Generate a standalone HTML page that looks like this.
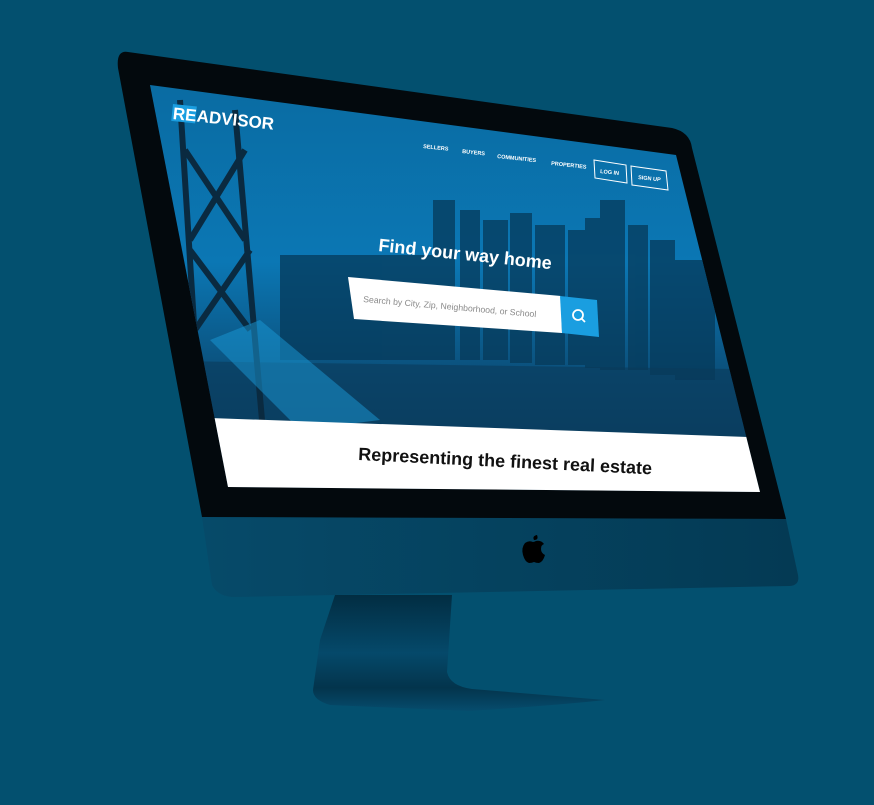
<!DOCTYPE html>
<html><head><meta charset="utf-8"><style>
html,body{margin:0;padding:0;background:#03506f;width:874px;height:805px;overflow:hidden}
svg{display:block}
text{font-family:"Liberation Sans",sans-serif}
</style></head><body>
<svg width="874" height="805" viewBox="0 0 874 805">
<defs>
<linearGradient id="hero" x1="0" y1="0" x2="0" y2="1">
<stop offset="0" stop-color="#0a6aa0"/><stop offset="0.45" stop-color="#0b77b4"/><stop offset="0.7" stop-color="#0b4f7a"/><stop offset="1" stop-color="#0a3552"/>
</linearGradient>
<linearGradient id="chin" x1="0" y1="0" x2="1" y2="0">
<stop offset="0" stop-color="#064a69"/><stop offset="1" stop-color="#043a54"/>
</linearGradient>
<linearGradient id="stand" x1="0" y1="0" x2="0" y2="1">
<stop offset="0" stop-color="#022d42"/><stop offset="0.5" stop-color="#05496a"/><stop offset="0.8" stop-color="#03344c"/><stop offset="1" stop-color="#064c6d"/>
</linearGradient>
<clipPath id="scr"><polygon points="150,85 676,155 760,492 228,487"/></clipPath>
</defs>
<!-- stand -->
<path d="M335,595 L452,595 L447,672 Q450,686 472,689 L605,700 Q560,705 470,711 L330,705 Q313,700 313,690 L320,640 Z" fill="url(#stand)"/>
<!-- chin -->
<path d="M202,517 L786,519 L798,575 Q800,585 790,586 L235,597 Q218,597 212,585 Z" fill="url(#chin)"/>
<!-- bezel -->
<path d="M128,52 L672,128 Q690,132 692,148 L786,519 L202,517 L118,68 Q116,50 128,52 Z" fill="#03090d"/>
<!-- screen -->
<g clip-path="url(#scr)">
<rect x="100" y="60" width="700" height="450" fill="url(#hero)"/>
<g fill="#063a5a" opacity="0.75">
<rect x="433" y="200" width="22" height="160"/><rect x="460" y="210" width="20" height="150"/>
<rect x="483" y="220" width="25" height="140"/><rect x="510" y="213" width="22" height="150"/>
<rect x="535" y="225" width="30" height="140"/><rect x="568" y="230" width="18" height="135"/>
<rect x="585" y="218" width="18" height="150"/><rect x="600" y="200" width="25" height="170"/>
<rect x="628" y="225" width="20" height="145"/><rect x="650" y="240" width="25" height="135"/>
<rect x="675" y="260" width="40" height="120"/><rect x="280" y="255" width="160" height="105"/>
</g>
<polygon points="100,360 800,370 800,440 100,430" fill="#0a3a5a" opacity="0.6"/>
<g stroke="#0a2a40" stroke-width="6" fill="none">
<line x1="180" y1="100" x2="200" y2="420"/><line x1="235" y1="110" x2="262" y2="420"/>
<line x1="185" y1="150" x2="245" y2="240"/><line x1="245" y1="150" x2="190" y2="240"/>
<line x1="190" y1="250" x2="250" y2="330"/><line x1="250" y1="250" x2="195" y2="330"/>
</g>
<polygon points="210,340 260,320 380,420 300,430" fill="#1a9ad8" opacity="0.5"/>
<polygon points="210,418 748,437 770,500 220,500" fill="#ffffff"/>
</g>
<!-- logo -->
<g transform="translate(173,104) rotate(6)">
<rect x="0" y="0" width="24" height="17" fill="#1a9ee0"/>
<text x="1" y="15" font-size="17" font-weight="bold" fill="#fff">RE</text>
<text x="25" y="15" font-size="17" font-weight="bold" fill="#fff">ADVISOR</text>
</g>
<g font-size="5.5" font-weight="bold" fill="#fff">
<text transform="translate(423,148) rotate(6)">SELLERS</text>
<text transform="translate(462,153) rotate(6)">BUYERS</text>
<text transform="translate(497,158) rotate(6)">COMMUNITIES</text>
<text transform="translate(551,165) rotate(6)">PROPERTIES</text>
</g>
<polygon points="594,160 626,165 627,183 595,178" fill="none" stroke="#fff" stroke-width="1"/>
<text transform="translate(600,173) rotate(6)" font-size="5.5" font-weight="bold" fill="#fff">LOG IN</text>
<polygon points="631,166 666,171 668,190 632,185" fill="none" stroke="#fff" stroke-width="1"/>
<text transform="translate(638,179) rotate(6)" font-size="5.5" font-weight="bold" fill="#fff">SIGN UP</text>
<text transform="translate(378,251) rotate(6)" font-size="18" font-weight="bold" fill="#fff">Find your way home</text>
<polygon points="348,277 561,296 562,333 354,319" fill="#fff"/>
<polygon points="560,296 597,300 599,337 562,333" fill="#1a9ee0"/>
<text transform="translate(363,302) rotate(5)" font-size="8.7" fill="#8a8a8a">Search by City, Zip, Neighborhood, or School</text>
<g transform="translate(578,315)" stroke="#fff" stroke-width="1.8" fill="none"><circle cx="0" cy="0" r="5"/><line x1="3.5" y1="3.5" x2="7" y2="7"/></g>
<text transform="translate(358,460) rotate(2.8)" font-size="18" font-weight="bold" fill="#111">Representing the finest real estate</text>
<g transform="translate(534,552)" fill="#000">
<path d="M0,-12 Q5,-12 3,-17 Q-2,-16 0,-12 Z"/>
<path d="M-1,-10 Q-5,-12 -9,-9 Q-13,-4 -11,3 Q-9,10 -5,11 Q-2,11 0,10 Q2,11 5,11 Q9,10 11,3 Q7,1 7,-3 Q7,-7 10,-8 Q7,-12 2,-11 Q0,-10 -1,-10 Z"/>
</g>
</svg>
</body></html>
